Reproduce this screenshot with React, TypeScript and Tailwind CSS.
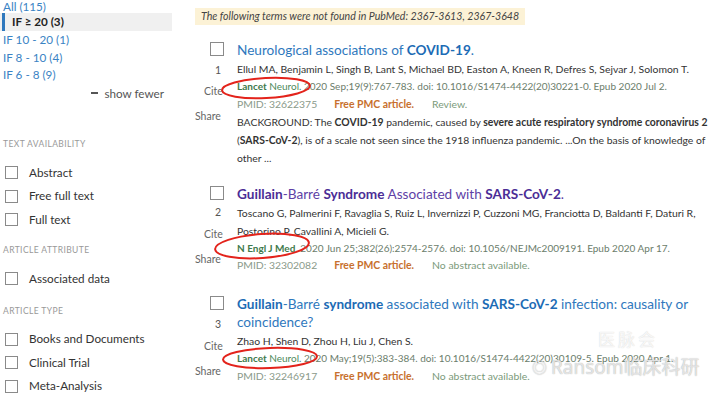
import React from 'react';

const Box = ({ className = '' }: { className?: string }) => (
  <span className={`block w-[13px] h-[13px] border border-[#8a8a8a] bg-white ${className}`} />
);

const FilterCheck = ({ label }: { label: string }) => (
  <div className="flex items-center h-[23.5px]">
    <Box className="ml-[5px]" />
    <span className="ml-[11px] text-[11.7px] text-[#333]">{label}</span>
  </div>
);

const Heading = ({ children }: { children: React.ReactNode }) => (
  <div className="pl-[3px] text-[8.5px] tracking-[0.4px] text-[#999] uppercase">{children}</div>
);

const Sidebar = () => (
  <div className="w-[195px] shrink-0 text-[11.7px]">
    <div className="pl-[3px] h-[13px] leading-[12px] text-[#3a83c4]">All (115)</div>
    <div className="w-[172px] h-[18px] flex items-center bg-[#f0f0f0]">
      <span className="ml-[2px] w-[3px] h-[18px] bg-[#2f78bd]" />
      <span className="ml-[7px] font-bold text-[#222]">IF ≥ 20 (3)</span>
    </div>
    <div className="pl-[3px] leading-[17.5px] text-[#3a83c4]">
      <div>IF 10 - 20 (1)</div>
      <div>IF 8 - 10 (4)</div>
      <div>IF 6 - 8 (9)</div>
    </div>
    <div className="flex items-center w-[164px] justify-end mt-[1px] text-[#555]">
      <span className="w-[7px] h-[2px] bg-[#555] mr-[6px]" />
      show fewer
    </div>
    <div className="mt-[36px]">
      <Heading>Text availability</Heading>
    </div>
    <div className="mt-[10px]">
      <FilterCheck label="Abstract" />
      <FilterCheck label="Free full text" />
      <FilterCheck label="Full text" />
    </div>
    <div className="mt-[13px]">
      <Heading>Article attribute</Heading>
    </div>
    <div className="mt-[10px]">
      <FilterCheck label="Associated data" />
    </div>
    <div className="mt-[14px]">
      <Heading>Article type</Heading>
    </div>
    <div className="mt-[10px]">
      <FilterCheck label="Books and Documents" />
      <FilterCheck label="Clinical Trial" />
      <FilterCheck label="Meta-Analysis" />
    </div>
  </div>
);

type ResultProps = {
  num: string;
  title: React.ReactNode;
  titleColor: string;
  authors: React.ReactNode;
  journal: React.ReactNode;
  pmid: string;
  snippet?: React.ReactNode;
  numGap: string;
  citeGap: string;
  top: string;
};

const Result = ({ num, title, titleColor, authors, journal, pmid, snippet, numGap, citeGap, top }: ResultProps) => (
  <div className={`flex ${top}`}>
    <div className="w-[42px] shrink-0 text-[10.5px] text-[#666] flex flex-col">
      <Box className="ml-[15px] mt-[1px] w-[14px] h-[14px]" />
      <div className={`pl-[20px] ${numGap} leading-[18px] text-[#555]`}>{num}</div>
      <div className={`pl-[9px] ${citeGap} leading-[18px]`}>Cite</div>
      <div className="mt-[7px] leading-[18px]">Share</div>
    </div>
    <div className="flex-1 min-w-0 text-[10.4px] leading-[18px] text-[#333]">
      <div className={`text-[13.6px] leading-[18px] ${titleColor}`}>{title}</div>
      <div className="mt-[1px]">{authors}</div>
      <div className="whitespace-nowrap text-[10px] leading-[17.5px] text-[#6b7d6b]">{journal}</div>
      <div className="whitespace-nowrap leading-[17px] text-[#8a9a8a]">
        <span>{pmid}</span>
        <span className="ml-[17px] font-bold text-[#c7702e]">Free PMC article.</span>
        {snippet ? (
          <span className="ml-[18px] text-[#7a9a7a]">Review.</span>
        ) : (
          <span className="ml-[18px] text-[#7a9a7a]">No abstract available.</span>
        )}
      </div>
      {snippet}
    </div>
  </div>
);

const Ellipse = ({ cx, cy, rx, ry, rot }: { cx: number; cy: number; rx: number; ry: number; rot: number }) => (
  <ellipse cx={cx} cy={cy} rx={rx} ry={ry} transform={`rotate(${rot} ${cx} ${cy})`} fill="none" stroke="#e3231b" strokeWidth="2" />
);

export default function App() {
  return (
    <div className="relative w-[716px] h-[397px] overflow-hidden bg-white font-['Lato','Open_Sans',sans-serif]">
      <div className="flex">
        <Sidebar />
        <div className="flex-1 min-w-0 pt-[8px]">
          <div className="w-fit bg-[#fcf2d6] px-[6px] h-[17px] leading-[17px] text-[10.6px] italic text-[#444]">
            The following terms were not found in PubMed: 2367-3613, 2367-3648
          </div>
          <div className="flex flex-col">
            <Result
              top="mt-[16px]"
              num="1"
              titleColor="text-[#2f78bd]"
              title={<>Neurological associations of <b className="text-[#1c6bb5]">COVID-19</b>.</>}
              authors="Ellul MA, Benjamin L, Singh B, Lant S, Michael BD, Easton A, Kneen R, Defres S, Sejvar J, Solomon T."
              journal={<><b className="text-[#3f7a4c]">Lancet</b> <span className="text-[#4d8a5a]">Neurol.</span> 2020 Sep;19(9):767-783. doi: 10.1016/S1474-4422(20)30221-0. Epub 2020 Jul 2.</>}
              pmid="PMID: 32622375"
              numGap="mt-[5px]"
              citeGap="mt-[3px]"
              snippet={
                <div>
                  <div className="whitespace-nowrap">BACKGROUND: The <b>COVID-19</b> pandemic, caused by <b>severe acute respiratory syndrome coronavirus 2</b></div>
                  <div className="whitespace-nowrap">(<b>SARS-CoV-2</b>), is of a scale not seen since the 1918 influenza pandemic. ...On the basis of knowledge of</div>
                  <div>other ...</div>
                </div>
              }
            />
            <Result
              top="mt-[18px]"
              num="2"
              titleColor="text-[#5e3fa6]"
              title={<><b className="text-[#4b2d96]">Guillain</b>-Barré <b className="text-[#4b2d96]">Syndrome</b> Associated with <b className="text-[#4b2d96]">SARS-CoV-2</b>.</>}
              authors={<><div className="whitespace-nowrap">Toscano G, Palmerini F, Ravaglia S, Ruiz L, Invernizzi P, Cuzzoni MG, Franciotta D, Baldanti F, Daturi R,</div><div>Postorino P, Cavallini A, Micieli G.</div></>}
              journal={<><b className="text-[#3f7a4c]">N Engl J Med</b>. 2020 Jun 25;382(26):2574-2576. doi: 10.1056/NEJMc2009191. Epub 2020 Apr 17.</>}
              pmid="PMID: 32302082"
              numGap="mt-[3px]"
              citeGap="mt-[4px]"
            />
            <Result
              top="mt-[21px]"
              num="3"
              titleColor="text-[#2f78bd]"
              title={<><div className="whitespace-nowrap"><b className="text-[#1c6bb5]">Guillain</b>-Barré <b className="text-[#1c6bb5]">syndrome</b> associated with <b className="text-[#1c6bb5]">SARS-CoV-2</b> infection: causality or</div><div>coincidence?</div></>}
              authors="Zhao H, Shen D, Zhou H, Liu J, Chen S."
              journal={<><b className="text-[#3f7a4c]">Lancet</b> <span className="text-[#4d8a5a]">Neurol.</span> 2020 May;19(5):383-384. doi: 10.1016/S1474-4422(20)30109-5. Epub 2020 Apr 1.</>}
              pmid="PMID: 32246917"
              numGap="mt-[5px]"
              citeGap="mt-[4px]"
            />
          </div>
        </div>
      </div>
      <svg className="absolute left-0 top-0 pointer-events-none" width="716" height="397">
        <Ellipse cx={266} cy={88} rx={44} ry={10} rot={-3} />
        <Ellipse cx={262} cy={246} rx={47} ry={12} rot={-4} />
        <Ellipse cx={270} cy={358} rx={47} ry={10} rot={-2} />
      </svg>
      <div className="absolute left-[598px] top-[326px] text-[17px] tracking-[3px] text-white/80 [text-shadow:0_0_1px_#ccc] font-['Noto_Sans_CJK_SC',sans-serif]">医脉会</div>
      <div className="absolute left-[532px] top-[353px] flex items-center gap-[4px] text-[19px] text-white/70 [text-shadow:0_0_1px_#999] font-['Noto_Sans','Noto_Sans_CJK_SC',sans-serif]">
        <span className="text-[15px]">◎</span>
        <span>Ransom临床科研</span>
      </div>
    </div>
  );
}
